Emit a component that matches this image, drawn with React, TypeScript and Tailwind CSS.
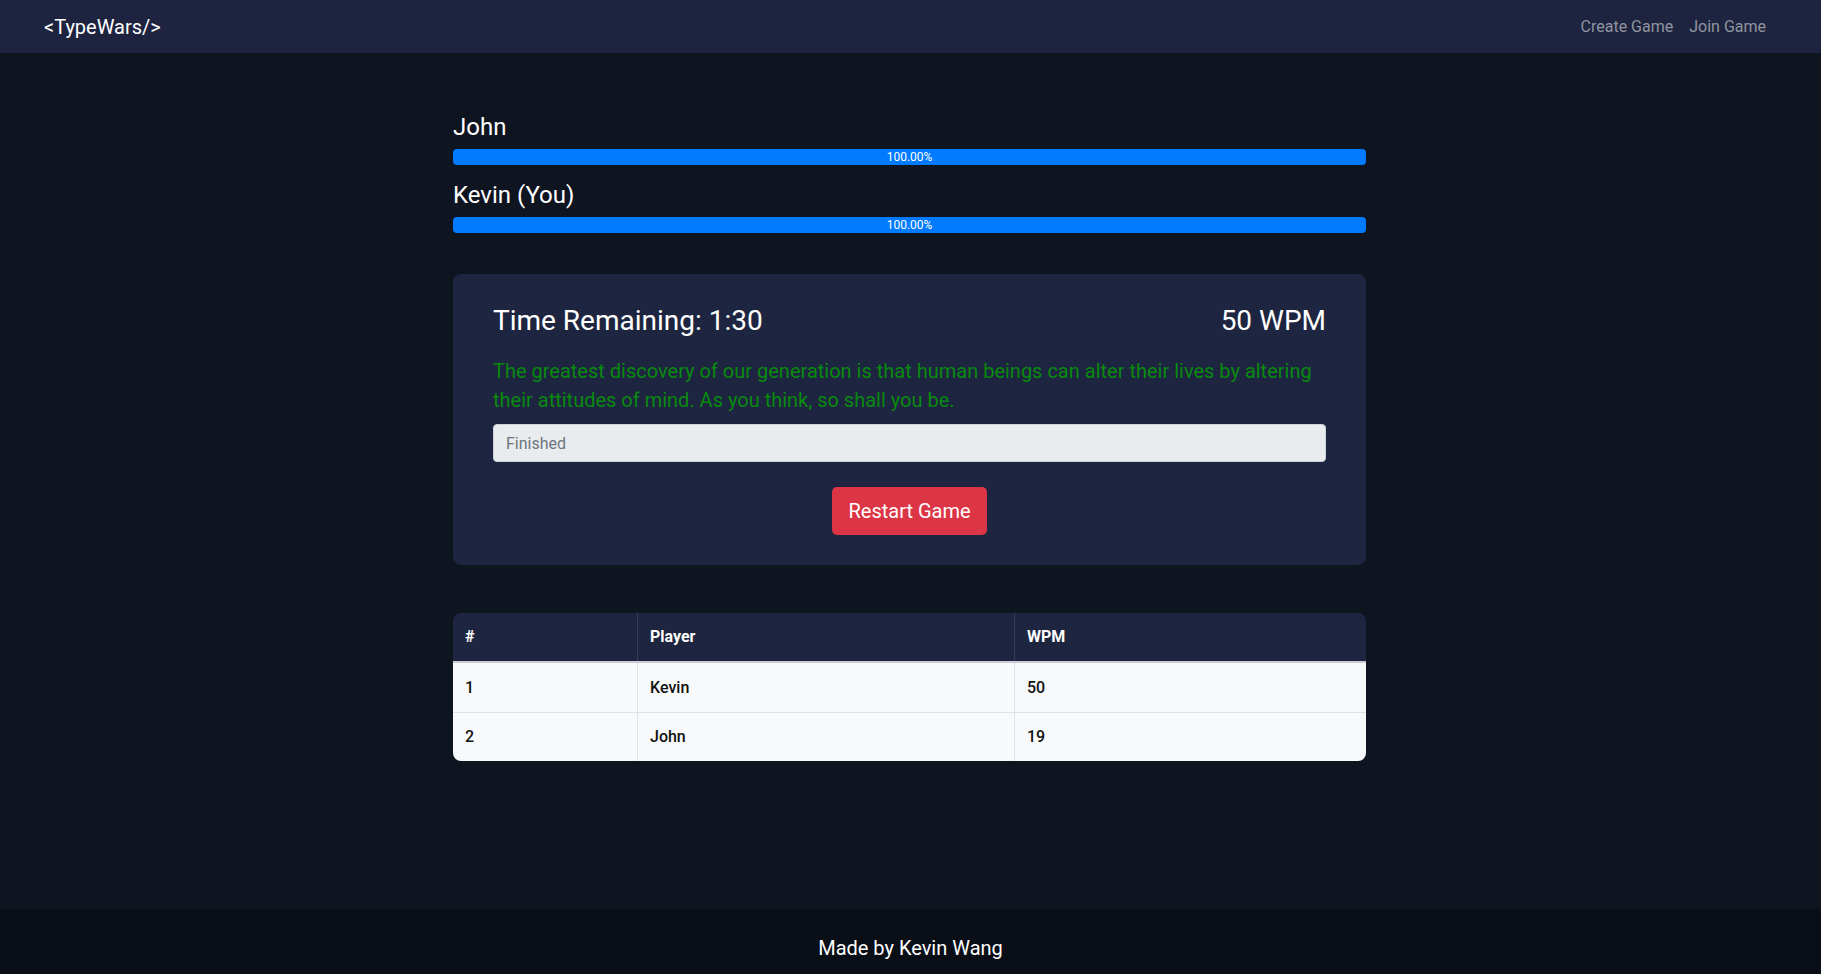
import React from "react"

interface PlayerProgress {
  name: string;
  percent: number;
}

interface ResultRow {
  rank: number;
  player: string;
  wpm: number;
}

const players: PlayerProgress[] = [
  { name: "John", percent: 100 },
  { name: "Kevin (You)", percent: 100 },
]

const results: ResultRow[] = [
  { rank: 1, player: "Kevin", wpm: 50 },
  { rank: 2, player: "John", wpm: 19 },
]

const quote =
  "The greatest discovery of our generation is that human beings can alter their lives by altering their attitudes of mind. As you think, so shall you be."

const ProgressBar = ({ name, percent }: PlayerProgress) => {
  return (
    <div className="flex flex-col">
      <h4 className="text-[24px] leading-[29px] text-white mb-[7px]">{name}</h4>
      <div className="h-4 w-full bg-[#e9ecef] rounded overflow-hidden mb-4">
        <div
          className="h-full bg-[#007bff] flex items-center justify-center text-[12px] text-white"
          style={{ width: `${percent}%` }}
        >
          {percent.toFixed(2)}%
        </div>
      </div>
    </div>
  )
}

export default function App() {
  return (
    <div
      className="min-h-screen flex flex-col bg-[#0f1421] text-white"
      style={{ fontFamily: "Roboto, 'Noto Sans', sans-serif" }}
    >
      <nav className="h-[53px] bg-[#1e2440] flex items-center justify-between pl-[44px] pr-[47px]">
        <a className="text-[20px] text-white">&lt;TypeWars/&gt;</a>
        <div className="flex items-center text-[16px] text-[#90949f]">
          <a className="px-2">Create Game</a>
          <a className="px-2">Join Game</a>
        </div>
      </nav>

      <main className="flex-1">
        <div className="w-[913px] mx-auto pt-[60px] -translate-x-px">
          {players.map((p, i) => (
            <ProgressBar key={i} name={p.name} percent={p.percent} />
          ))}

          <div className="mt-[25px] bg-[#1e2540] rounded-lg px-10 pt-[30px] pb-[30px] flex flex-col">
            <div className="flex items-center justify-between text-[28px] leading-[34px]">
              <h3>Time Remaining: 1:30</h3>
              <h3>50 WPM</h3>
            </div>
            <p className="mt-[19px] text-[20px] leading-[29px] text-[#088a0e]">{quote}</p>
            <input
              disabled
              placeholder="Finished"
              className="mt-[9px] h-[38px] w-full rounded bg-[#e9ecef] border border-[#ced4da] px-3 text-[16px] placeholder:text-[#6c757d]"
            />
            <div className="mt-[25px] flex justify-center">
              <button className="h-12 px-4 rounded-[5px] bg-[#dc3545] text-white text-[20px]">
                Restart Game
              </button>
            </div>
          </div>

          <div className="mt-[48px] rounded-lg overflow-hidden text-[16px]">
            <div className="grid grid-cols-[185px_377px_1fr] h-[50px] bg-[#1e2540] font-bold text-white border-b-2 border-[#c8ccd3]">
              <div className="px-3 flex items-center border-r border-[#363d55]">#</div>
              <div className="px-3 flex items-center border-r border-[#363d55]">Player</div>
              <div className="px-3 flex items-center">WPM</div>
            </div>
            {results.map((r, i) => (
              <div
                key={i}
                className={`grid grid-cols-[185px_377px_1fr] h-[49px] bg-[#f8f9fa] text-[#111] font-medium ${
                  i > 0 ? "border-t border-[#dee2e6]" : ""
                }`}
              >
                <div className="px-3 flex items-center border-r border-[#dee2e6]">{r.rank}</div>
                <div className="px-3 flex items-center border-r border-[#dee2e6]">{r.player}</div>
                <div className="px-3 flex items-center">{r.wpm}</div>
              </div>
            ))}
          </div>
        </div>
      </main>

      <footer className="h-[65px] bg-[#0a0e17] flex justify-center pt-[24px]">
        <p className="text-[20px] leading-[30px] h-[30px] text-white">Made by Kevin Wang</p>
      </footer>
    </div>
  )
}
